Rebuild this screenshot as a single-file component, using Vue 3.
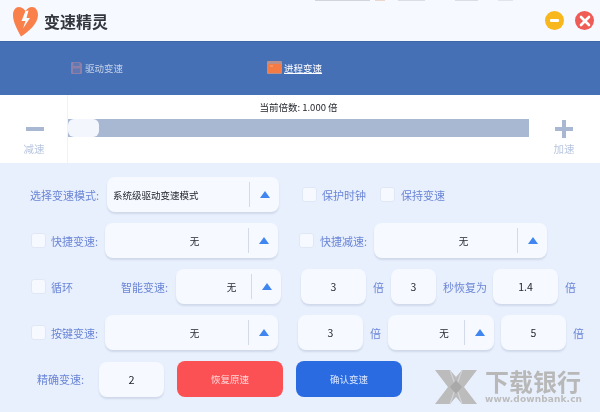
<script setup>
</script>

<template>
  <div class="app">
    <header class="titlebar">
      <svg class="logo" width="25" height="30" viewBox="0 0 25 30">
        <path d="M12.5 4 C10.5 1.2 8 0 6 0 C2.5 0 0 3.5 0 8 C0 15 4 22 8 29.5 C15 25 25 17 25 8 C25 3.5 22.5 0 19 0 C16.5 0 14.5 1.2 12.5 4 Z" fill="#f9804a"/>
        <path d="M12.5 4 L8.5 14 H12.5 L10 21.5 L17 11 H13.5 L15.5 3.5 Z" fill="#f8fbff"/>
      </svg>
      <h1 class="title">变速精灵</h1>
      <button class="win win-min" aria-label="最小化"><span class="win-dash"></span></button>
      <button class="win win-close" aria-label="关闭">
        <svg width="12" height="12" viewBox="0 0 12 12"><path d="M2 2 L10 10 M10 2 L2 10" stroke="#fff" stroke-width="2.6" stroke-linecap="round"/></svg>
      </button>
    </header>

    <nav class="tabs">
      <div class="tab tab-drive">
        <svg width="11" height="12" viewBox="0 0 11 12">
          <path d="M0 1 Q0 0 1 0 H9 L11 2 V11 Q11 12 10 12 H1 Q0 12 0 11 Z" fill="#8d7fa6"/>
          <rect x="2.5" y="0.8" width="6" height="3.2" fill="#5f78b3"/>
          <rect x="2" y="6.5" width="7" height="4.5" fill="#5f78b3"/>
        </svg>
        <span>驱动变速</span>
      </div>
      <div class="tab tab-process">
        <svg width="15" height="13" viewBox="0 0 15 13">
          <rect width="15" height="13" rx="1" fill="#b78f8c"/>
          <rect x="1" y="3" width="13" height="9" fill="#f47b43"/>
          <path d="M3 5 H6" stroke="#fbb48e" stroke-width="0.8"/>
        </svg>
        <span class="active">进程变速</span>
      </div>
    </nav>

    <section class="speed">
      <button class="step step-down">
        <span class="minus"></span>
        <span class="step-text">减速</span>
      </button>
      <div class="slider">
        <div class="current">当前倍数: 1.000 倍</div>
        <div class="track"><div class="thumb"></div></div>
      </div>
      <button class="step step-up">
        <span class="plus"></span>
        <span class="step-text">加速</span>
      </button>
    </section>

    <main class="form">
      <div class="row">
        <label class="lab w69 ml30">选择变速模式:</label>
        <div class="select s-mode">
          <span class="val-left">系统级驱动变速模式</span>
          <span class="arrow-box"><i class="arrow"></i></span>
        </div>
        <span class="check ml23"></span>
        <label class="lab ml5">保护时钟</label>
        <span class="check ml14"></span>
        <label class="lab ml6">保持变速</label>
      </div>

      <div class="row">
        <span class="check ml31"></span>
        <label class="lab ml5 w48">快捷变速:</label>
        <div class="select s-wide ml6">
          <span class="val">无</span>
          <span class="arrow-box"><i class="arrow"></i></span>
        </div>
        <span class="check ml21"></span>
        <label class="lab ml6 w48">快捷减速:</label>
        <div class="select s-wide ml6">
          <span class="val">无</span>
          <span class="arrow-box"><i class="arrow"></i></span>
        </div>
      </div>

      <div class="row">
        <span class="check ml31"></span>
        <label class="lab ml5 w22">循环</label>
        <label class="lab ml48 w48">智能变速:</label>
        <div class="select s-small ml7">
          <span class="val">无</span>
          <span class="arrow-box"><i class="arrow"></i></span>
        </div>
        <div class="input w65 ml20">3</div>
        <label class="lab ml7 w11">倍</label>
        <div class="input w45 ml7">3</div>
        <label class="lab ml7 w43">秒恢复为</label>
        <div class="input w65 ml7">1.4</div>
        <label class="lab ml7 w11">倍</label>
      </div>

      <div class="row">
        <span class="check ml31"></span>
        <label class="lab ml5 w48">按键变速:</label>
        <div class="select s-wide ml6">
          <span class="val">无</span>
          <span class="arrow-box"><i class="arrow"></i></span>
        </div>
        <div class="input w65 ml20">3</div>
        <label class="lab ml7 w11">倍</label>
        <div class="select s-row4 ml7">
          <span class="val">无</span>
          <span class="arrow-box"><i class="arrow"></i></span>
        </div>
        <div class="input w65 ml7">5</div>
        <label class="lab ml7 w11">倍</label>
      </div>

      <div class="row row-last">
        <label class="lab ml37 w48">精确变速:</label>
        <div class="input w65 ml14 num">2</div>
        <button class="btn btn-red">恢复原速</button>
        <button class="btn btn-blue">确认变速</button>
      </div>
    </main>

    <div class="top-edge"></div>

    <div class="watermark">
      <svg class="wm-logo" width="42" height="34" viewBox="0 0 42 34">
        <path d="M0 0 H15 L21 7 L27 0 H42 L29 17 L42 34 H27 L21 27 L15 34 H0 L13 17 Z" fill="#bcbcbc"/>
        <path d="M15 0 L27 34 M27 0 L15 34" stroke="#d2d4d9" stroke-width="1.2"/>
        <path d="M21 10 L27 17 L21 24 L15 17 Z" fill="#a9a9a9"/>
      </svg>
      <div class="wm-text">
        <div class="wm-cn">下载银行</div>
        <div class="wm-en">www.downbank.cn</div>
      </div>
    </div>
  </div>
</template>

<style scoped>
.app {
  position: relative;
  width: 600px;
  height: 412px;
  overflow: hidden;
  background: #e9f0fd;
  font-family: "Noto Sans CJK SC", "Noto Sans", sans-serif;
  font-size: 9.5px;
  color: #24272d;
  filter: blur(0.3px);
}
button { font-family: inherit; border: 0; padding: 0; }

.titlebar {
  height: 41px;
  display: flex;
  align-items: center;
  background: #f6f9ff;
}
.logo { margin-left: 13px; margin-top: 3px; flex: none; }
.title {
  margin: 0 0 0 6px;
  font-size: 16px;
  font-weight: 700;
  color: #33363c;
  flex: 1;
  line-height: 1;
}
.win {
  width: 19px;
  height: 19px;
  border-radius: 50%;
  display: flex;
  align-items: center;
  justify-content: center;
}
.win-min { background: #f7b71d; margin-right: 11px; }
.win-dash { width: 9px; height: 2.5px; border-radius: 1px; background: #fff; }
.win-close { background: #ef5b55; margin-right: 6px; }

.tabs {
  height: 54px;
  background: #4670b5;
  border-top: 1px solid #3f66a6;
  box-sizing: border-box;
  display: flex;
  align-items: center;
  padding-bottom: 2px;
  color: #c3d0e8;
}
.tab { display: flex; align-items: center; gap: 3px; }
.tab-drive { margin-left: 71px; }
.tab-process { margin-left: 144px; gap: 2px; }
.tab .active { color: #fff; text-decoration: underline; text-underline-offset: 1px; }

.speed {
  height: 68px;
  background: #fff;
  display: flex;
}
.step {
  background: transparent;
  display: flex;
  flex-direction: column;
  align-items: center;
  flex: none;
}
.step-down { width: 67px; border-right: 1px solid #eef2f9; box-sizing: content-box; }
.step-up { width: 70px; margin-right: 1px; }
.minus { width: 18px; height: 4px; background: #a8b7d2; margin-top: 32px; margin-left: 2px; }
.plus { width: 18px; height: 18px; margin-top: 25px; background:
  linear-gradient(#a8b7d2, #a8b7d2) center / 18px 4px no-repeat,
  linear-gradient(#a8b7d2, #a8b7d2) center / 4px 18px no-repeat; }
.step-text {
  font-size: 10.5px;
  color: #b9c6df;
  line-height: 14px;
}
.step-down .step-text { margin-top: 11px; margin-left: 1px; }
.step-up .step-text { margin-top: 4px; }
.slider { flex: 1; min-width: 0; }
.current {
  height: 24px;
  line-height: 24px;
  text-align: center;
}
.track { height: 18px; background: #a8b7d2; }
.thumb {
  width: 31px;
  height: 18px;
  background: #f3f6fd;
  border-radius: 6px;
}

.form {
  padding-top: 14px;
  display: flex;
  flex-direction: column;
  gap: 11px;
}
.row {
  height: 35px;
  display: flex;
  align-items: center;
}
.row-last { height: 36px; }

.lab {
  font-size: 11px;
  color: #6a85d6;
  white-space: nowrap;
  flex: none;
}
.check {
  width: 15px;
  height: 15px;
  flex: none;
  background: #f6f9ff;
  border: 1px solid #e1e8f5;
  border-radius: 3px;
  box-sizing: border-box;
}
.select {
  height: 35px;
  display: flex;
  align-items: center;
  background: #f6f9ff;
  border-radius: 8px;
  box-shadow: 0 2px 2px #cfd9ea;
  flex: none;
}
.s-mode { width: 172px; margin-left: 8px; }
.s-wide { width: 173px; }
.s-small { width: 105px; }
.s-row4 { width: 106px; }
.val-left { flex: 1; padding-left: 6px; }
.val { flex: 1; text-align: center; padding-left: 36px; }
.arrow-box {
  width: 29px;
  height: 25px;
  flex: none;
  display: flex;
  align-items: center;
  justify-content: center;
  border-left: 1px solid #d3dbe8;
}
.arrow {
  width: 0;
  height: 0;
  border-left: 5px solid transparent;
  border-right: 5px solid transparent;
  border-bottom: 7px solid #3f86f0;
}
.input {
  height: 35px;
  line-height: 35px;
  text-align: center;
  font-size: 10.5px;
  background: #f6f9ff;
  border-radius: 8px;
  box-shadow: 0 2px 2px #cfd9ea;
  flex: none;
}
.num { font-size: 11px; }
.btn {
  width: 106px;
  height: 36px;
  border-radius: 8px;
  font-size: 9.5px;
  flex: none;
}
.btn-red { background: #fb5154; margin-left: 13px; color: #ffd9da; }
.btn-blue { background: #2a6be2; margin-left: 13px; color: #dbe7ff; }

.w11 { width: 11px; }
.w22 { width: 22px; }
.w43 { width: 43px; }
.w45 { width: 45px; }
.w48 { width: 48px; }
.w65 { width: 65px; }
.w69 { width: 69px; }
.ml5 { margin-left: 5px; }
.ml6 { margin-left: 6px; }
.ml7 { margin-left: 7px; }
.ml14 { margin-left: 14px; }
.ml20 { margin-left: 20px; }
.ml21 { margin-left: 21px; }
.ml23 { margin-left: 23px; }
.ml30 { margin-left: 30px; }
.ml31 { margin-left: 31px; }
.ml37 { margin-left: 37px; }
.ml48 { margin-left: 48px; }

.top-edge {
  position: absolute;
  left: 315px;
  top: 0;
  width: 200px;
  height: 1px;
  opacity: 0.7;
  background:
    linear-gradient(#c4c7ce, #c4c7ce) 0 0 / 55px 1px no-repeat,
    linear-gradient(#e8c9b4, #e8c9b4) 60px 0 / 10px 1px no-repeat,
    linear-gradient(#cfd2d8, #cfd2d8) 83px 0 / 27px 1px no-repeat,
    linear-gradient(#cfd2d8, #cfd2d8) 140px 0 / 23px 1px no-repeat,
    linear-gradient(#dadce1, #dadce1) 183px 0 / 15px 1px no-repeat;
}

.watermark {
  position: absolute;
  left: 435px;
  top: 370px;
  display: flex;
  gap: 8px;
  pointer-events: none;
}
.wm-logo { flex: none; }
.wm-text { display: flex; flex-direction: column; }
.wm-cn {
  font-size: 24px;
  font-weight: 700;
  height: 22px;
  line-height: 21px;
  color: #b8b8b8;
  width: 97px;
}
.wm-en {
  font-family: "DejaVu Sans", sans-serif;
  font-size: 9px;
  font-weight: 700;
  line-height: 10px;
  letter-spacing: 0.13px;
  margin-top: 2px;
  color: #bcbcbc;
  white-space: nowrap;
}
</style>
